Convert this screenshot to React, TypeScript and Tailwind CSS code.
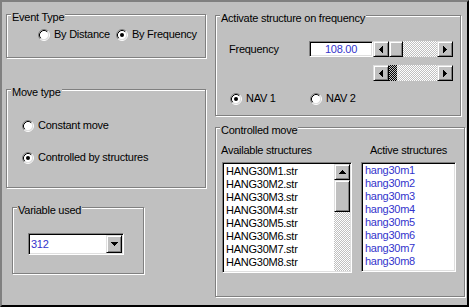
import React from 'react';

const BTN = "bg-[#c0c0c0] border border-t-[#dfdfdf] border-l-[#dfdfdf] border-r-black border-b-black shadow-[inset_1px_1px_0_#fff,inset_-1px_-1px_0_#808080] flex items-center justify-center shrink-0";
const SUNKEN = "border border-t-[#808080] border-l-[#808080] border-r-white border-b-white shadow-[inset_1px_1px_0_#000,inset_-1px_-1px_0_#dfdfdf] p-[1px]";
const CHECKER = "bg-[image:repeating-conic-gradient(#c0c0c0_0_25%,#ffffff_0_50%)] bg-[length:2px_2px]";
const DARK_CHECKER = "bg-[image:repeating-conic-gradient(#000000_0_25%,#c0c0c0_0_50%)] bg-[length:2px_2px]";

// pixel arrows
const arrows = {
  left: { w: 4, h: 7, d: "M3 0h1v7h-1zM2 1h1v5h-1zM1 2h1v3h-1zM0 3h1v1h-1z" },
  right: { w: 4, h: 7, d: "M0 0h1v7h-1zM1 1h1v5h-1zM2 2h1v3h-1zM3 3h1v1h-1z" },
  up: { w: 7, h: 4, d: "M3 0h1v1h-1zM2 1h3v1h-3zM1 2h5v1h-5zM0 3h7v1h-7z" },
  down: { w: 7, h: 4, d: "M0 0h7v1h-7zM1 1h5v1h-5zM2 2h3v1h-3zM3 3h1v1h-1z" },
};

function Arrow({ dir }: { dir: keyof typeof arrows }) {
  const a = arrows[dir];
  return (
    <svg width={a.w} height={a.h} viewBox={`0 0 ${a.w} ${a.h}`} shapeRendering="crispEdges">
      <path d={a.d} fill="#000" />
    </svg>
  );
}

function Radio({ checked }: { checked?: boolean }) {
  return (
    <svg width="12" height="12" viewBox="0 0 12 12" className="shrink-0">
      <circle cx="6" cy="6" r="4.5" fill="#fff" />
      <path d="M2.11 9.89A5.5 5.5 0 0 1 9.89 2.11" stroke="#808080" fill="none" />
      <path d="M9.89 2.11A5.5 5.5 0 0 1 2.11 9.89" stroke="#fff" fill="none" />
      <path d="M2.82 9.18A4.5 4.5 0 0 1 9.18 2.82" stroke="#000" fill="none" />
      <path d="M9.18 2.82A4.5 4.5 0 0 1 2.82 9.18" stroke="#dfdfdf" fill="none" />
      {checked && <circle cx="6" cy="6" r="2" fill="#000" />}
    </svg>
  );
}

function Option({ label, checked, className = "" }: { label: string; checked?: boolean; className?: string }) {
  return (
    <div className={`flex items-center gap-[4px] h-[13px] ${className}`}>
      <Radio checked={checked} />
      <span className="whitespace-nowrap">{label}</span>
    </div>
  );
}

function Group({ label, className = "", children }: { label: string; className?: string; children?: React.ReactNode }) {
  return (
    <div className={`relative shrink-0 border border-[#808080] shadow-[inset_1px_1px_0_#fff,1px_1px_0_#fff] ${className}`}>
      <span className="absolute left-[4px] top-[-4px] bg-[#c0c0c0] px-[1px] whitespace-nowrap">{label}</span>
      {children}
    </div>
  );
}

function HScroll({ dark }: { dark?: boolean }) {
  return (
    <div className="flex w-[80px] h-[16px] shrink-0">
      <div className={`${BTN} w-[16px] h-[16px]`}><Arrow dir="left" /></div>
      {dark ? (
        <div className={`w-[8px] h-full ${DARK_CHECKER}`} />
      ) : (
        <div className={`${BTN} w-[14px] h-[16px]`} />
      )}
      <div className={`flex-1 h-full ${CHECKER}`} />
      <div className={`${BTN} w-[16px] h-[16px]`}><Arrow dir="right" /></div>
    </div>
  );
}

const available = ["HANG30M1.str", "HANG30M2.str", "HANG30M3.str", "HANG30M4.str", "HANG30M5.str", "HANG30M6.str", "HANG30M7.str", "HANG30M8.str", "HANG30M9.str"];
const active = ["hang30m1", "hang30m2", "hang30m3", "hang30m4", "hang30m5", "hang30m6", "hang30m7", "hang30m8"];

export default function App() {
  return (
    <div className="w-[469px] h-[307px] overflow-hidden bg-[#c0c0c0] border-2 border-t-[#808080] border-l-[#808080] border-r-black border-b-black flex font-['Liberation_Sans',Arial,sans-serif] text-[11px] leading-[13px] tracking-[-0.25px] text-black">
      {/* LEFT COLUMN */}
      <div className="flex flex-col w-[213px] shrink-0 pl-[4px] pt-[12px]">
        <Group label="Event Type" className="w-[200px] h-[44px]">
          <div className="flex mt-[13px] pl-[31px]">
            <Option label="By Distance" />
            <Option label="By Frequency" checked className="ml-[6px]" />
          </div>
        </Group>

        <Group label="Move type" className="w-[200px] h-[99px] mt-[31px]">
          <Option label="Constant move" className="mt-[29px] ml-[15px]" />
          <Option label="Controlled by structures" checked className="mt-[19px] ml-[15px]" />
        </Group>

        <Group label="Variable used" className="w-[132px] h-[67px] mt-[19px] ml-[6px]">
          <div className={`ml-[15px] mt-[25px] w-[96px] h-[22px] bg-white flex ${SUNKEN}`}>
            <span className="flex-1 pl-[1px] leading-[18px] text-[#3333cc]">312</span>
            <div className={`${BTN} w-[16px] h-full`}><Arrow dir="down" /></div>
          </div>
        </Group>
      </div>

      {/* RIGHT COLUMN */}
      <div className="flex flex-col pt-[13px]">
        <Group label="Activate structure on frequency" className="w-[246px] h-[101px]">
          <div className="flex items-center pl-[13px] mt-[25px]">
            <span className="w-[80px] shrink-0">Frequency</span>
            <div className={`w-[64px] h-[16px] bg-white text-center leading-[12px] text-[#3333cc] ${SUNKEN}`}>108.00</div>
            <HScroll />
          </div>
          <div className="ml-[157px] mt-[8px]">
            <HScroll dark />
          </div>
          <div className="flex mt-[11px] pl-[14px]">
            <Option label="NAV 1" checked className="w-[80px]" />
            <Option label="NAV 2" />
          </div>
        </Group>

        <Group label="Controlled move" className="w-[250px] h-[170px] mt-[11px]">
          <div className="flex mt-[16px] pl-[6px]">
            <div className="flex flex-col w-[130px]">
              <span className="-ml-[1px] whitespace-nowrap">Available structures</span>
              <div className={`mt-[5px] h-[111px] bg-white flex overflow-hidden ${SUNKEN}`}>
                <div className="flex-1 pl-[2px] pt-[1px] overflow-hidden">
                  {available.map((s) => (
                    <div key={s} className="h-[13px] whitespace-nowrap">{s}</div>
                  ))}
                </div>
                <div className="w-[16px] flex flex-col shrink-0">
                  <div className={`${BTN} w-[16px] h-[16px]`}><Arrow dir="up" /></div>
                  <div className={`${BTN} w-[16px] h-[32px]`} />
                  <div className={`flex-1 ${CHECKER}`} />
                </div>
              </div>
            </div>
            <div className="flex flex-col items-center w-[95px] ml-[9px]">
              <span className="whitespace-nowrap">Active structures</span>
              <div className={`mt-[5px] w-full h-[110px] bg-white overflow-hidden pl-[3px] pt-[1px] text-[#3333cc] ${SUNKEN}`}>
                {active.map((s) => (
                  <div key={s} className="h-[13px] whitespace-nowrap">{s}</div>
                ))}
              </div>
            </div>
          </div>
        </Group>
      </div>
    </div>
  );
}
